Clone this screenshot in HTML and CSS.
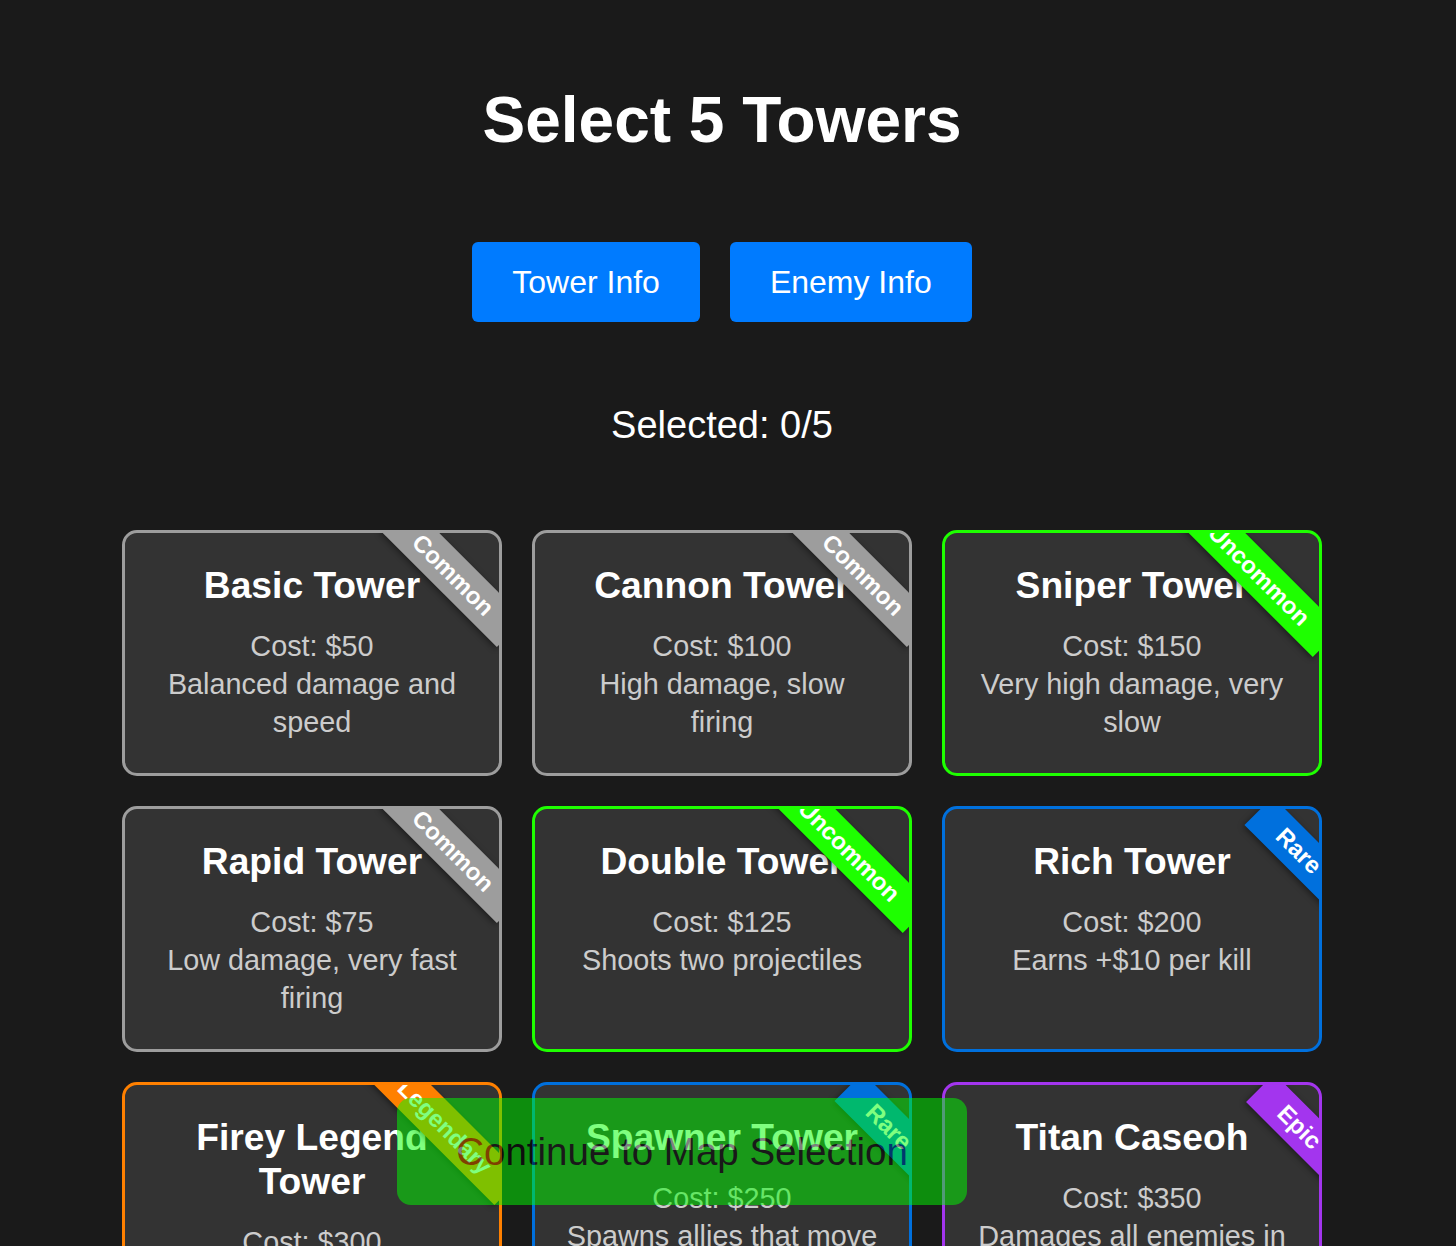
FILE: index.html
```html
<!DOCTYPE html>
<html lang="en">
<head>
<meta charset="utf-8">
<title>Select 5 Towers</title>
<link rel="stylesheet" href="styles.css">
</head>
<body>
<main class="page">
  <h1 class="page-title">Select 5 Towers</h1>
  <div class="info-buttons">
    <button class="info-btn">Tower Info</button>
    <button class="info-btn">Enemy Info</button>
  </div>
  <p class="selected-count">Selected: 0/5</p>
  <div class="tower-grid">
    <div class="tower-card common">
      <h3 class="tower-name">Basic Tower</h3>
      <p class="tower-text">Cost: $50<br>Balanced damage and speed</p>
      <div class="ribbon">Common</div>
    </div>
    <div class="tower-card common">
      <h3 class="tower-name">Cannon Tower</h3>
      <p class="tower-text">Cost: $100<br>High damage, slow firing</p>
      <div class="ribbon">Common</div>
    </div>
    <div class="tower-card uncommon">
      <h3 class="tower-name">Sniper Tower</h3>
      <p class="tower-text">Cost: $150<br>Very high damage, very slow</p>
      <div class="ribbon">Uncommon</div>
    </div>
    <div class="tower-card common">
      <h3 class="tower-name">Rapid Tower</h3>
      <p class="tower-text">Cost: $75<br>Low damage, very fast firing</p>
      <div class="ribbon">Common</div>
    </div>
    <div class="tower-card uncommon">
      <h3 class="tower-name">Double Tower</h3>
      <p class="tower-text">Cost: $125<br>Shoots two projectiles</p>
      <div class="ribbon">Uncommon</div>
    </div>
    <div class="tower-card rare">
      <h3 class="tower-name">Rich Tower</h3>
      <p class="tower-text">Cost: $200<br>Earns +$10 per kill</p>
      <div class="ribbon">Rare</div>
    </div>
    <div class="tower-card legendary">
      <h3 class="tower-name">Firey Legend Tower</h3>
      <p class="tower-text">Cost: $300<br>Burns enemies over time</p>
      <div class="ribbon">Legendary</div>
    </div>
    <div class="tower-card rare">
      <h3 class="tower-name">Spawner Tower</h3>
      <p class="tower-text">Cost: $250<br>Spawns allies that move along the path</p>
      <div class="ribbon">Rare</div>
    </div>
    <div class="tower-card epic">
      <h3 class="tower-name">Titan Caseoh</h3>
      <p class="tower-text">Cost: $350<br>Damages all enemies in range</p>
      <div class="ribbon">Epic</div>
    </div>
  </div>
</main>
<button class="continue-btn">Continue to Map Selection</button>
</body>
</html>
```

FILE: styles.css
```css
html, body {
  margin: 0;
  padding: 0;
  background: #1a1a1a;
  color: #fff;
  font-family: "Liberation Sans", Arial, Helvetica, sans-serif;
}

.page {
  width: 1444px;
  display: flex;
  flex-direction: column;
  align-items: center;
  padding-bottom: 40px;
}

.page-title {
  margin: 84px 0 0;
  font-size: 64px;
  line-height: 72px;
  font-weight: bold;
}

.info-buttons {
  display: flex;
  gap: 30px;
  margin-top: 86px;
}

.info-btn {
  background: #007bff;
  color: #fff;
  border: none;
  border-radius: 6px;
  font-family: inherit;
  font-size: 32px;
  line-height: 36px;
  padding: 22px 40px;
}

.selected-count {
  margin: 82px 0 0;
  font-size: 38px;
  line-height: 42px;
}

.tower-grid {
  display: grid;
  grid-template-columns: repeat(3, 380px);
  gap: 30px;
  margin-top: 84px;
}

.tower-card {
  position: relative;
  overflow: hidden;
  background: #333;
  border: 3px solid #9d9d9d;
  border-radius: 15px;
  padding: 30px 31.5px 32px;
  text-align: center;
}

.tower-card.common { border-color: #9d9d9d; }
.tower-card.uncommon { border-color: #1eff00; }
.tower-card.rare { border-color: #0070dd; }
.tower-card.epic { border-color: #a335ee; }
.tower-card.legendary { border-color: #ff8000; }

.tower-name {
  margin: 0 -12px 20px;
  font-size: 37.2px;
  line-height: 44px;
  font-weight: bold;
  color: #fff;
}

.tower-text {
  margin: 0;
  font-size: 28.8px;
  line-height: 38px;
  color: #ccc;
}

.ribbon {
  position: absolute;
  top: 22px;
  right: -36px;
  padding: 6px 30px;
  font-size: 24px;
  line-height: 28px;
  font-weight: bold;
  color: #fff;
  background: #9d9d9d;
  transform: rotate(45deg);
  box-shadow: 0 2px 6px rgba(0, 0, 0, 0.45);
  white-space: nowrap;
}

.common .ribbon { background: #9d9d9d; }
.uncommon .ribbon { background: #1eff00; }
.rare .ribbon { background: #0070dd; }
.epic .ribbon { background: #a335ee; }
.legendary .ribbon { background: #ff8000; }

.continue-btn {
  position: fixed;
  left: 397px;
  bottom: 41px;
  width: 570px;
  height: 107px;
  background: #00ff00;
  color: #000;
  border: none;
  border-radius: 14px;
  font-family: inherit;
  font-size: 38.5px;
  opacity: 0.5;
  padding: 0;
}
```
